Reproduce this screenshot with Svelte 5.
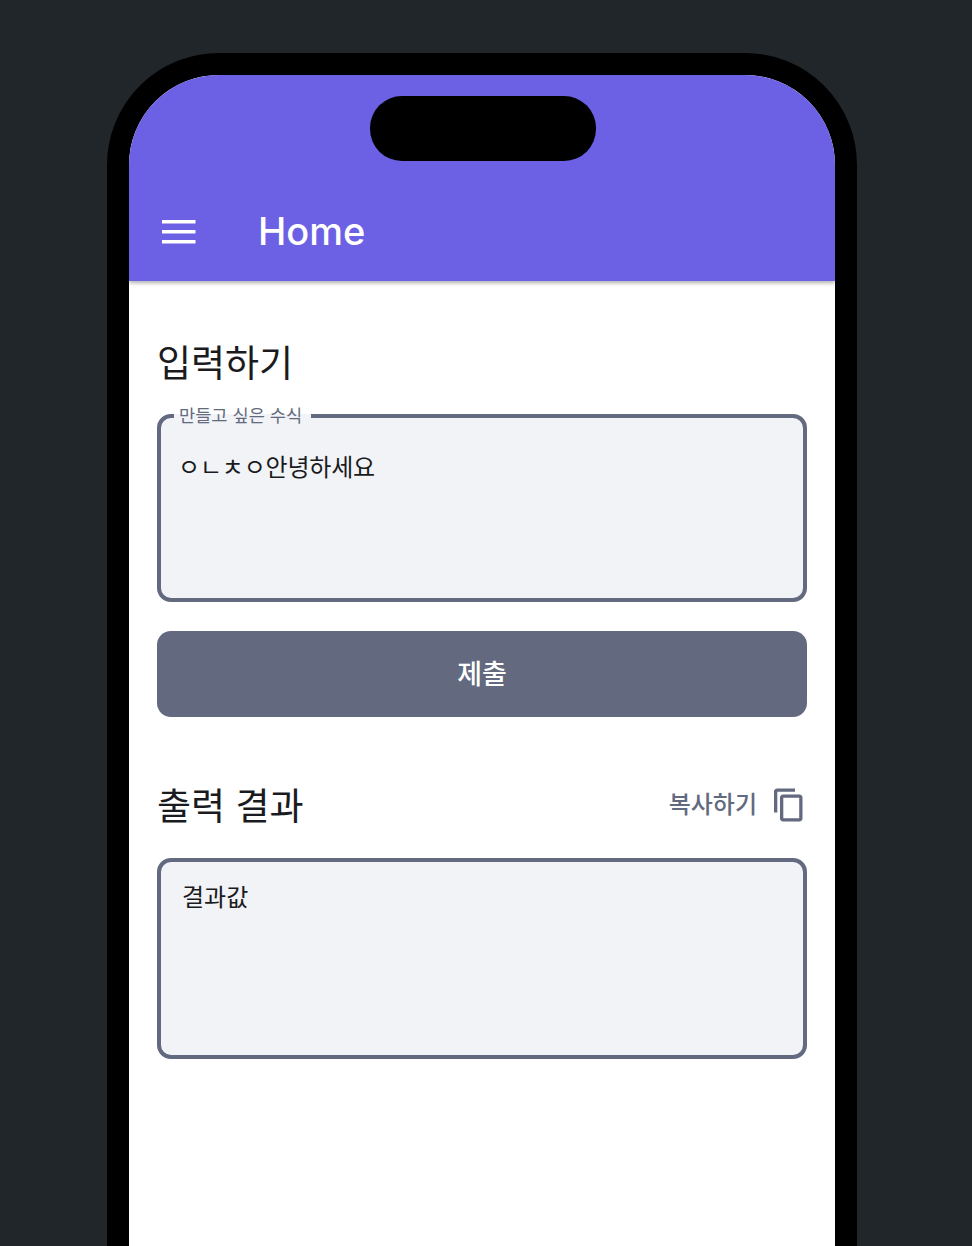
<script lang="ts">
	let formula = $state("ㅇㄴㅊㅇ안녕하세요");
	let result = $state("결과값");
</script>

<div class="page">
	<div class="phone">
		<div class="island"></div>
		<header class="appbar">
			<button class="menu" aria-label="menu">
				<svg width="34" height="26" viewBox="0 0 34 26">
					<path d="M0 2h33.500v3.400H0zM0 12h33.500v3.400H0zM0 22h33.500v3.400H0z" fill="#fff" />
				</svg>
			</button>
			<h1>Home</h1>
		</header>
		<main class="content">
			<h2>입력하기</h2>
			<fieldset class="field">
				<legend>만들고 싶은 수식</legend>
				<div class="value">{formula}</div>
			</fieldset>
			<button class="submit"><span>제출</span></button>

			<div class="result-head">
				<h2>출력 결과</h2>
				<button class="copy">
					<span>복사하기</span>
					<svg width="36" height="36" viewBox="0 0 24 24" fill="#636a80">
						<path d="M16 1H4c-1.100 0-2 .9-2 2v14h2.200V3.200H16V1zm3 4H8c-1.100 0-2 .9-2 2v14c0 1.100.9 2 2 2h11c1.100 0 2-.9 2-2V7c0-1.100-.9-2-2-2zm-.2 15.800H8.200V7.200h10.600v13.600z" />
					</svg>
				</button>
			</div>
			<div class="output">{result}</div>
		</main>
	</div>
</div>

<style>
	:global(body) {
		margin: 0;
		background: #21262a;
	}

	.page {
		height: 1246px;
		overflow: hidden;
		padding-top: 53px;
		box-sizing: border-box;
		font-family: Inter, "Noto Sans CJK KR", sans-serif;
	}

	.phone {
		position: relative;
		width: 750px;
		height: 1400px;
		margin-left: 107px;
		box-sizing: border-box;
		border: 22px solid #000;
		border-radius: 112px;
		background: #fff;
		overflow: hidden;
	}

	.island {
		position: absolute;
		top: 21px;
		left: 241px;
		width: 226px;
		height: 65px;
		border-radius: 32px;
		background: #000;
	}

	.appbar {
		height: 206px;
		box-sizing: border-box;
		padding: 0 0 27px 33px;
		background: #6c61e4;
		box-shadow: 0 2px 4px rgba(0, 0, 0, 0.32);
		display: flex;
		align-items: flex-end;
		gap: 62px;
		color: #fff;
	}

	.menu {
		border: 0;
		padding: 0;
		background: none;
		display: flex;
		margin-bottom: 10px;
	}

	h1 {
		margin: 0;
		font-family: Inter, sans-serif;
		font-size: 38px;
		font-weight: 500;
		line-height: 46px;
	}

	.content {
		padding: 60px 28px 0;
		display: flex;
		flex-direction: column;
	}

	h2 {
		margin: 0;
		font-size: 37px;
		font-weight: 400;
		line-height: 46px;
		color: #1a1b20;
	}

	.field {
		margin: 20px 0 0;
		padding: 0 21px;
		height: 195px;
		box-sizing: border-box;
		border: 4px solid #636a80;
		border-radius: 14px;
		background: #f2f3f7;
	}

	legend {
		margin-left: -8px;
		padding: 0 9px 0 5px;
		font-size: 17.600px;
		line-height: 18px;
		color: #636a80;
	}

	.value {
		margin-top: 26px;
		margin-left: -4px;
		font-size: 24px;
		letter-spacing: -0.2px;
		line-height: 34px;
		color: #1a1b20;
	}

	.submit {
		margin-top: 29px;
		height: 86px;
		padding: 0 0 4px;
		border: 0;
		border-radius: 14px;
		background: #636a80;
		color: #fff;
		font: 500 27px Inter, "Noto Sans CJK KR", sans-serif;
	}

	.result-head {
		margin-top: 67px;
		display: flex;
		align-items: center;
		justify-content: space-between;
	}

	.copy {
		border: 0;
		padding: 0;
		margin-bottom: 4px;
		background: none;
		display: flex;
		align-items: center;
		gap: 14px;
		color: #636a80;
		font: 500 24px Inter, "Noto Sans CJK KR", sans-serif;
	}

	.copy span {
		margin-bottom: 6px;
	}

	.output {
		margin-top: 28px;
		height: 201px;
		box-sizing: border-box;
		padding: 19px 21px;
		border: 4px solid #636a80;
		border-radius: 14px;
		background: #f2f3f7;
		font-size: 24px;
		line-height: 34px;
		color: #1a1b20;
	}
</style>
